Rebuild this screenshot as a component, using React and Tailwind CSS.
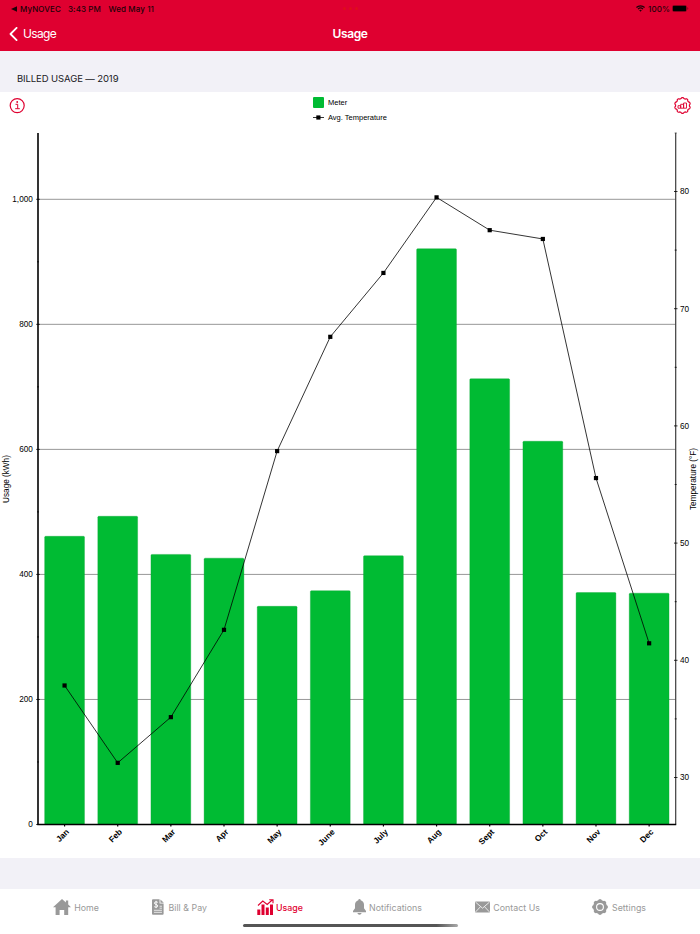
const MONTHS = [
  { label: "Jan", usage: 461, temp: 37.85 },
  { label: "Feb", usage: 493, temp: 31.25 },
  { label: "Mar", usage: 432, temp: 35.15 },
  { label: "Apr", usage: 426, temp: 42.6 },
  { label: "May", usage: 349, temp: 57.85 },
  { label: "June", usage: 374, temp: 67.6 },
  { label: "July", usage: 430, temp: 73.05 },
  { label: "Aug", usage: 921, temp: 79.5 },
  { label: "Sept", usage: 713, temp: 76.7 },
  { label: "Oct", usage: 613, temp: 75.95 },
  { label: "Nov", usage: 371, temp: 55.55 },
  { label: "Dec", usage: 370, temp: 41.45 },
];

// Plot area, in svg units
const LEFT = 38;
const RIGHT = 675.7;
const TOP = 3;
const BOTTOM = 694.5;
const STEP = (RIGHT - LEFT) / MONTHS.length;

const usageY = (v) => BOTTOM - v * 0.6252;
const tempY = (t) => 61.5 + (80 - t) * 11.72;
const monthX = (i) => LEFT + STEP * (i + 0.5);

// Closed outline with evenly spaced round teeth
const gearPath = (cx, cy, radius, depth, teeth) => {
  const points = Array.from({ length: 120 }, (_, i) => {
    const a = (i / 120) * Math.PI * 2;
    const r = radius + depth * Math.tanh(2 * Math.cos(teeth * a));
    return `${(cx + r * Math.sin(a)).toFixed(2)} ${(cy - r * Math.cos(a)).toFixed(2)}`;
  });
  return `M${points.join("L")}Z`;
};

const HomeIcon = () => (
  <svg width="18" height="16" viewBox="0 0 18 16" fill="currentColor">
    <path d="M9 0 0 8.2h2.6V16h4v-5h4.6v5h4V8.2H18l-2.8-2.6V1.5h-2.3v2Z" />
  </svg>
);

const BillIcon = () => (
  <svg width="12" height="16" viewBox="0 0 12.4 16">
    <path d="M1 0h6.8v4.5H12V15a1 1 0 0 1-1 1H1a1 1 0 0 1-1-1V1a1 1 0 0 1 1-1Z" fill="currentColor" />
    <path d="M8.7.3 12.2 3.7H8.7Z" fill="currentColor" />
    <path
      d="M6 3.2C5.2 2.5 2.5 2.4 2.5 4c0 1.7 3.4 1 3.4 2.9 0 1.6-2.6 1.6-3.6.7M4.2 1.6v7.6"
      fill="none"
      stroke="white"
      strokeWidth="1"
    />
    <path d="M7.8 7.2h2.5M7.8 9.2h2.5M2 11.4h8.3M2 13.5h8.3" stroke="white" strokeWidth="0.8" />
  </svg>
);

const UsageIcon = () => (
  <svg width="17" height="16" viewBox="0 0 17 16" fill="currentColor">
    <path d="M.3 10.5h3V16h-3zM4.5 5.5h3V16h-3zM8.8 8.5h3V16h-3zM13 5.5h3V16h-3z" />
    <path d="M1 6.5 5.8 2l4.4 3.5L15.2 1M12.2.8h3.8v3.4" fill="none" stroke="currentColor" strokeWidth="1.1" />
  </svg>
);

const BellIcon = () => (
  <svg width="13" height="16" viewBox="0 0 13 16" fill="currentColor">
    <path d="M6.5 0a1.2 1.2 0 0 0-1.2 1.2C3.1 1.800 2 3.5 2 5.8v3.4L0 12v1.2h13V12l-2-2.8V5.8c0-2.3-1.1-4-3.3-4.6A1.2 1.2 0 0 0 6.5 0ZM4.5 14.1h4c0 2.3-4 2.3-4 0Z" />
  </svg>
);

const MailIcon = () => (
  <svg width="15" height="12" viewBox="0 0 15 12" className="-mt-px">
    <rect y=".5" width="15" height="11" rx=".8" fill="currentColor" />
    <path d="m.6 1.2 6.9 6 6.9-6M.6 10.9l4.8-5.1M14.4 10.9 9.6 5.8" fill="none" stroke="white" strokeWidth=".8" />
  </svg>
);

const SettingsIcon = () => (
  <svg width="16" height="16" viewBox="0 0 16 16">
    <path d={gearPath(8, 8, 7.4, 0.5, 8)} fill="currentColor" />
    <circle cx="8" cy="8" r="3.4" fill="none" stroke="white" strokeWidth="1.1" />
  </svg>
);

const TABS = [
  { label: "Home", box: "ml-[53px] w-[46px]", icon: <HomeIcon /> },
  { label: "Bill & Pay", box: "ml-[53px] w-[55px]", icon: <BillIcon /> },
  { label: "Usage", box: "ml-[50px] w-[46px]", icon: <UsageIcon />, active: true },
  { label: "Notifications", box: "ml-[50px] w-[69px]", icon: <BellIcon /> },
  { label: "Contact Us", box: "ml-[53px] w-[65px]", icon: <MailIcon /> },
  { label: "Settings", box: "ml-[52px] w-[54px]", icon: <SettingsIcon /> },
];

const StatusBar = () => (
  <div className="grid h-[17px] grid-cols-[1fr_auto_1fr] items-center px-[11px] text-[8px] leading-none font-medium text-[#1c0208]">
    <div className="flex items-center tracking-[0.1px]">
      <svg width="6" height="6" viewBox="0 0 6 6" className="mr-[3px]">
        <path d="M0 3 6 .3v5.4Z" fill="currentColor" />
      </svg>
      <span className="w-12">MyNOVEC</span>
      <span className="w-[40.5px] whitespace-nowrap">3:43 PM</span>
      <span className="whitespace-nowrap">Wed May 11</span>
    </div>
    <div className="flex gap-[3px]">
      <span className="h-[3px] w-[3px] rounded-full bg-[#e00d1c]" />
      <span className="h-[3px] w-[3px] rounded-full bg-[#e00d1c]" />
      <span className="h-[3px] w-[3px] rounded-full bg-[#e00d1c]" />
    </div>
    <div className="flex items-center justify-self-end">
      <svg width="9" height="7" viewBox="0 0 9 7" fill="none" stroke="currentColor" strokeWidth="1.2">
        <path d="M.4 2.5C2.7.2 6.3.2 8.6 2.5M2 4.2c1.4-1.4 3.6-1.4 5 0" />
        <path d="m3.2 5.3 1.3 1.4 1.3-1.4c-.7-.7-1.9-.7-2.6 0Z" fill="currentColor" stroke="none" />
      </svg>
      <span className="ml-[3px] w-[22px] tracking-[0.1px]">100%</span>
      <svg width="17" height="7" viewBox="0 0 17 7" className="ml-[2px]">
        <rect x=".3" y=".3" width="14.4" height="6.4" rx="1.8" fill="none" stroke="currentColor" strokeWidth=".5" opacity=".5" />
        <rect x=".8" y=".8" width="13.4" height="5.4" rx="1.2" fill="black" />
        <path d="M15.5 2.3v2.4c1-.4 1-2 0-2.4Z" fill="currentColor" opacity=".6" />
      </svg>
    </div>
  </div>
);

const NavBar = () => (
  <div className="grid h-[34px] grid-cols-3 items-center text-[12px] text-white">
    <button type="button" className="flex items-center pl-[9px] leading-none">
      <svg width="9" height="14" viewBox="0 0 9 14" fill="none" stroke="currentColor">
        <path d="M7.600.9 1.5 7l6.1 6.1" strokeWidth="1.8" strokeLinecap="round" strokeLinejoin="round" />
      </svg>
      <span className="ml-[5px] tracking-[-0.65px]">Usage</span>
    </button>
    <h1 className="text-center leading-none font-semibold tracking-[-0.4px]">Usage</h1>
  </div>
);

const ChartHeader = () => (
  <div className="grid h-[38px] grid-cols-[1fr_auto_1fr] items-start px-[9px] text-[#df0030]">
    <button type="button" aria-label="Information" className="mt-[5px] justify-self-start">
      <svg width="16" height="17" viewBox="0 0 16 17" fill="none" stroke="currentColor">
        <circle cx="8.2" cy="8.6" r="7" strokeWidth="1.2" />
        <path d="M6.5 7.3h2.2v4.3M6.2 11.7h4.6" strokeWidth="1" />
        <circle cx="8.2" cy="5" r=".9" fill="currentColor" stroke="none" />
      </svg>
    </button>
    <div className="flex w-[74px] flex-col font-['Liberation_Sans',sans-serif] text-[7.5px] leading-none text-black">
      <div className="mt-[5px] flex h-[11px] items-center gap-[4px]">
        <span className="h-[11px] w-[11px] rounded-[1px] bg-[#00bb33]" />
        Meter
      </div>
      <div className="mt-1 flex h-[11px] items-center gap-[4px] whitespace-nowrap">
        <svg width="11" height="5" viewBox="0 0 11 5" className="shrink-0">
          <path d="M0 2.5h11" stroke="black" strokeWidth=".8" />
          <rect x="3.3" y=".4" width="4.2" height="4.2" />
        </svg>
        Avg. Temperature
      </div>
    </div>
    <button type="button" aria-label="Chart options" className="mt-[5px] justify-self-end">
      <svg width="17" height="17" viewBox="0 0 17 17" fill="none" stroke="currentColor">
        <path d={gearPath(8.5, 8.5, 7.4, 0.5, 10)} strokeWidth="1.2" />
        <path d="M4 8.7h2.7v2.5H4ZM6.7 7.3h2.9v3.9H6.7ZM9.6 6h2.9v5.2H9.6Z" strokeWidth=".9" />
      </svg>
    </button>
  </div>
);

const UsageChart = () => (
  <svg
    width="700"
    height="728"
    viewBox="0 0 700 728"
    className="block font-['Liberation_Sans',sans-serif]"
    role="img"
    aria-label="Billed usage and average temperature"
  >
    {[200, 400, 600, 800, 1000].map((v) => (
      <line key={v} x1={LEFT} x2={RIGHT} y1={usageY(v)} y2={usageY(v)} stroke="#8c8c8c" strokeWidth="0.9" />
    ))}

    {/* Bars */}
    {MONTHS.map((m, i) => (
      <rect
        key={m.label}
        x={monthX(i) - 19.9}
        y={usageY(m.usage)}
        width="39.8"
        height={BOTTOM - usageY(m.usage)}
        rx="1"
        fill="#00bb33"
        stroke="#00a52d"
        strokeWidth="0.35"
      />
    ))}

    {/* Left axis */}
    <path d={`M${LEFT} ${TOP}V${BOTTOM}`} stroke="black" strokeWidth="1.6" />
    {[0, 1, 2, 3, 4, 5, 6, 7, 8, 9, 10].map((n) => (
      <path
        key={n}
        d={n % 2 ? `M37 ${usageY(n * 100)}h2` : `M36.2 ${usageY(n * 100)}h3.6`}
        stroke="black"
        strokeWidth="0.8"
      />
    ))}
    {[0, 200, 400, 600, 800, 1000].map((v) => (
      <text key={v} x="32.8" y={usageY(v) + 2.8} textAnchor="end" fontSize="8.2">
        {v.toLocaleString("en-US")}
      </text>
    ))}

    {/* Right axis */}
    <path d={`M${RIGHT} ${TOP}V${BOTTOM}`} stroke="#3c3c3c" strokeWidth="1.2" />
    <path d={`M674.7 ${TOP}h2`} stroke="#3c3c3c" strokeWidth="0.8" />
    {[35, 45, 55, 65, 75].map((t) => (
      <path key={t} d={`M674.7 ${tempY(t)}h2`} stroke="black" strokeWidth="0.8" />
    ))}
    {[30, 40, 50, 60, 70, 80].map((t) => (
      <g key={t}>
        <path d={`M674 ${tempY(t)}h3.5`} stroke="black" strokeWidth="0.8" />
        <text x="680" y={tempY(t) + 2.8} fontSize="8.2">
          {t}
        </text>
      </g>
    ))}

    {/* Month axis */}
    <path d={`M${LEFT - 0.8} ${BOTTOM}H${RIGHT + 0.5}`} stroke="black" strokeWidth="1.4" />
    {MONTHS.map((m, i) => (
      <g key={m.label}>
        <path d={`M${monthX(i)} ${BOTTOM}v2`} stroke="black" strokeWidth="1.2" />
        <text
          transform={`translate(${monthX(i) + 5} ${BOTTOM + 8}) rotate(-45)`}
          textAnchor="end"
          fontSize="8.3"
          fontWeight="700"
        >
          {m.label}
        </text>
      </g>
    ))}

    {/* Average temperature */}
    <polyline
      points={MONTHS.map((m, i) => `${monthX(i)},${tempY(m.temp)}`).join(" ")}
      fill="none"
      stroke="black"
      strokeWidth="0.8"
    />
    {MONTHS.map((m, i) => (
      <rect key={m.label} x={monthX(i) - 2.1} y={tempY(m.temp) - 2.1} width="4.2" height="4.2" />
    ))}

    <text transform="translate(8.5 349) rotate(-90)" textAnchor="middle" fontSize="8.2">
      Usage (kWh)
    </text>
    <text transform="translate(695.5 349) rotate(-90)" textAnchor="middle" fontSize="8.2">
      Temperature (°F)
    </text>
  </svg>
);

const TabBar = () => (
  <nav className="flex h-[45px] flex-col items-center bg-white">
    <div className="flex w-full pt-[10px]">
      {TABS.map((tab) => (
        <button
          key={tab.label}
          type="button"
          className={[
            "flex h-4 items-center justify-between text-[8.8px] leading-none tracking-[0.04px] whitespace-nowrap",
            tab.box,
            tab.active ? "font-medium text-[#df0030]" : "text-[#999999]",
          ].join(" ")}
        >
          {tab.icon}
          <span className="pt-[2px]">{tab.label}</span>
        </button>
      ))}
    </div>
    <div className="mt-[9px] h-[3px] w-[215px] rounded-full bg-linear-to-r from-[#555555] from-90% to-[#aaaaaa]" />
  </nav>
);

export default function App() {
  return (
    <div className="flex h-[934px] w-[700px] flex-col overflow-hidden bg-[#f2f1f7] font-['Inter',sans-serif]">
      <header className="h-[51px] bg-[#df0030]">
        <StatusBar />
        <NavBar />
      </header>
      <h2 className="h-[41px] pt-[22px] pl-[17px] text-[9.5px] leading-[11px] tracking-[-0.1px] text-[#202024]">
        BILLED USAGE — 2019
      </h2>
      <main className="h-[766px] bg-white">
        <ChartHeader />
        <UsageChart />
      </main>
      <div className="h-[31px]" />
      <TabBar />
    </div>
  );
}
